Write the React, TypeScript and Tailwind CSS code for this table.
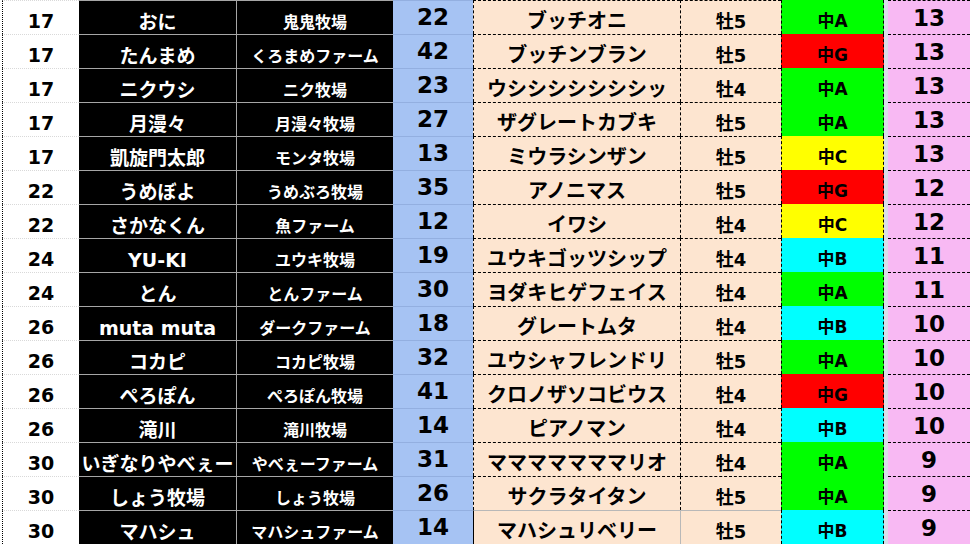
import React from "react";

type Row = {
  rank: number;
  owner: string;
  farm: string;
  no: number;
  horse: string;
  sex: string;
  grade: string;
  pts: number;
};

const rows: Row[] = [
  { rank: 17, owner: "おに", farm: "鬼鬼牧場", no: 22, horse: "ブッチオニ", sex: "牡5", grade: "中A", pts: 13 },
  { rank: 17, owner: "たんまめ", farm: "くろまめファーム", no: 42, horse: "ブッチンブラン", sex: "牡5", grade: "中G", pts: 13 },
  { rank: 17, owner: "ニクウシ", farm: "ニク牧場", no: 23, horse: "ウシシシシシシシッ", sex: "牡4", grade: "中A", pts: 13 },
  { rank: 17, owner: "月漫々", farm: "月漫々牧場", no: 27, horse: "ザグレートカブキ", sex: "牡5", grade: "中A", pts: 13 },
  { rank: 17, owner: "凱旋門太郎", farm: "モンタ牧場", no: 13, horse: "ミウラシンザン", sex: "牡5", grade: "中C", pts: 13 },
  { rank: 22, owner: "うめぼよ", farm: "うめぶろ牧場", no: 35, horse: "アノニマス", sex: "牡5", grade: "中G", pts: 12 },
  { rank: 22, owner: "さかなくん", farm: "魚ファーム", no: 12, horse: "イワシ", sex: "牡4", grade: "中C", pts: 12 },
  { rank: 24, owner: "YU-KI", farm: "ユウキ牧場", no: 19, horse: "ユウキゴッツシップ", sex: "牡4", grade: "中B", pts: 11 },
  { rank: 24, owner: "とん", farm: "とんファーム", no: 30, horse: "ヨダキヒゲフェイス", sex: "牡4", grade: "中A", pts: 11 },
  { rank: 26, owner: "muta muta", farm: "ダークファーム", no: 18, horse: "グレートムタ", sex: "牡4", grade: "中B", pts: 10 },
  { rank: 26, owner: "コカピ", farm: "コカピ牧場", no: 32, horse: "ユウシャフレンドリ", sex: "牡5", grade: "中A", pts: 10 },
  { rank: 26, owner: "ぺろぽん", farm: "ぺろぽん牧場", no: 41, horse: "クロノザソコビウス", sex: "牡4", grade: "中G", pts: 10 },
  { rank: 26, owner: "滝川", farm: "滝川牧場", no: 14, horse: "ピアノマン", sex: "牡4", grade: "中B", pts: 10 },
  { rank: 30, owner: "いぎなりやべぇー", farm: "やべぇーファーム", no: 31, horse: "マママママママリオ", sex: "牡4", grade: "中A", pts: 9 },
  { rank: 30, owner: "しょう牧場", farm: "しょう牧場", no: 26, horse: "サクラタイタン", sex: "牡5", grade: "中A", pts: 9 },
  { rank: 30, owner: "マハシュ", farm: "マハシュファーム", no: 14, horse: "マハシュリベリー", sex: "牡5", grade: "中B", pts: 9 },
];

const gradeBg: Record<string, string> = {
  "中A": "bg-[#00ff00]",
  "中B": "bg-[#00ffff]",
  "中C": "bg-[#ffff00]",
  "中G": "bg-[#ff0000]",
};

// Latin glyphs from DejaVu (Verdana-ish, like the sheet's font), kana/kanji from Noto CJK
const font = { fontFamily: '"DejaVu Sans", "Noto Sans CJK JP", sans-serif' };

export default function App() {
  return (
    <div className="w-[970px] h-[544px] overflow-hidden bg-white pl-[2px]" style={font}>
      {rows.map((r, i) => {
        const last = i === rows.length - 1;
        const peachLine = last ? "border-t border-solid border-t-[#b8b8b8]" : "border-t border-dashed border-t-black";
        const peachSplit = last ? "border-l border-solid border-l-[#b8b8b8]" : "border-l border-dashed border-l-black";
        return (
          <div key={i} className="flex h-[34px] font-bold leading-none">
            <div className="w-[77px] flex items-center justify-center pt-[8px] border-l border-dotted border-l-black border-t border-t-[#d9d9d9] text-[19px] text-black">
              {r.rank}
            </div>
            <div className="w-[157px] flex items-center justify-center pt-[10px] bg-black text-white border-t border-t-[#a6a6a6] text-[19px] whitespace-nowrap">
              {r.owner}
            </div>
            <div className="w-[157px] flex items-center justify-center pt-[11px] bg-black text-white border-t border-t-[#a6a6a6] border-l border-l-[#a6a6a6] text-[16px] whitespace-nowrap">
              {r.farm}
            </div>
            <div className="w-[80px] flex items-center justify-center bg-[#a6c3f3] border-t border-t-[#93afe0] text-[23px] text-black">
              {r.no}
            </div>
            <div className={`w-[207px] flex items-center justify-center pt-[6px] bg-[#fde5d0] border-l border-dashed border-l-black ${peachLine} text-[20px] text-black whitespace-nowrap`}>
              {r.horse}
            </div>
            <div className={`w-[101px] flex items-center justify-center pt-[9px] bg-[#fde5d0] ${peachSplit} ${peachLine} text-[18px] text-black`}>
              {r.sex}
            </div>
            <div className={`w-[103px] flex items-center justify-center pt-[9px] ${gradeBg[r.grade]} border-l border-dashed border-l-black border-r border-r-black border-dashed text-[17px] text-black`}>
              {r.grade}
            </div>
            <div className="w-[4px] bg-[#d9dee8]" />
            <div className="flex-1 flex items-center justify-center pt-[1px] bg-[#f8b9f3] border-t border-dashed border-t-black text-[23px] text-black">
              {r.pts}
            </div>
          </div>
        );
      })}
    </div>
  );
}
